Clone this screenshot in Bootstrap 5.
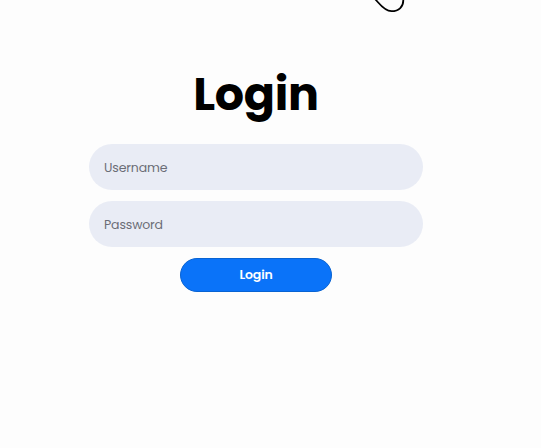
<!DOCTYPE html>
<html lang="en">
<head>
<meta charset="utf-8">
<meta name="viewport" content="width=device-width, initial-scale=1">
<title>Login</title>
<link rel="stylesheet" href="https://cdn.jsdelivr.net/npm/bootstrap@5.3.0/dist/css/bootstrap.min.css">
<style>
body { background: #fdfdfd; font-family: Poppins, Inter, sans-serif; }
.login-panel { width: 334px; margin-left: 89px; }
.doodle { display: block; height: 14px; margin-left: 374px; width: 32px; }
.login-title { font-size: 46px; font-weight: 700; line-height: 60px; margin-top: 50px; margin-bottom: 20px; color: #000; letter-spacing: -.3px; }
.login-panel .form-control { height: 46px; padding: 1px 15px 0; background: #e9ecf5; font-size: 12.5px; letter-spacing: -.15px; }
.login-panel .form-control + .form-control { margin-top: 11px; }
.login-panel .form-control::placeholder { color: #6b6d76; }
.login-panel .btn { width: 152px; height: 34px; margin-top: 11px; background: #0a73f9; border: 1px solid #0963d2; font-size: 12.5px; letter-spacing: -.15px; }
</style>
</head>
<body class="overflow-hidden">
<svg class="doodle" viewBox="0 0 32 14" fill="none" stroke="#000" stroke-width="1.8" aria-hidden="true"><path d="M1-1C5 3 10 11.200 17.500 11.200C24.500 11.200 30 7 29.200-1"/></svg>
<main class="login-panel">
  <h1 class="login-title text-center">Login</h1>
  <form class="d-flex flex-column align-items-center">
    <input class="form-control border-0 rounded-pill" type="text" placeholder="Username" aria-label="Username">
    <input class="form-control border-0 rounded-pill" type="password" placeholder="Password" aria-label="Password">
    <button class="btn btn-primary rounded-pill fw-semibold p-0" type="button">Login</button>
  </form>
</main>
<script src="https://cdn.jsdelivr.net/npm/bootstrap@5.3.0/dist/js/bootstrap.bundle.min.js"></script>
</body>
</html>
